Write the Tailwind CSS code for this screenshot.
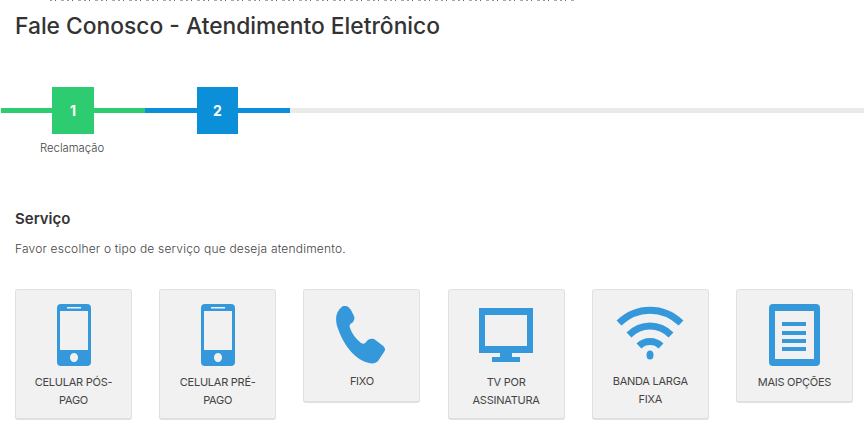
<!DOCTYPE html>
<html lang="pt-BR">
<head>
<meta charset="utf-8">
<title>Fale Conosco</title>
<script src="https://cdn.jsdelivr.net/npm/@tailwindcss/browser@4"></script>
</head>
<body class="bg-white w-[864px] h-[430px] overflow-hidden font-['Inter','Liberation_Sans',sans-serif] text-[#333]">
  <div class="h-[1px] ml-[50px] w-[525px] bg-[repeating-linear-gradient(90deg,#999_0_2px,transparent_2px_5px,#666_5px_6px,transparent_6px_11px,#aaa_11px_14px,transparent_14px_17px)]"></div>
  <h1 class="ml-[15px] mt-[11px] h-[28px] text-[22.8px] leading-[28px] font-[550] text-[#333] whitespace-nowrap">Fale Conosco - Atendimento Eletrônico</h1>

  <div class="relative mt-[47px] h-[47px] flex items-center">
    <div class="ml-[1px] w-[144px] h-[5px] bg-[#2ecc71]"></div>
    <div class="w-[145px] h-[5px] bg-[#0a8fd8]"></div>
    <div class="flex-1 h-[5px] bg-[#eaeaea]"></div>
    <div class="absolute left-[52px] top-0 w-[42px] h-[47px] bg-[#2ecc71] text-white text-[14px] font-bold flex items-center justify-center">1</div>
    <div class="absolute left-[197px] top-0 w-[41px] h-[47px] bg-[#0a8fd8] text-white text-[14px] font-bold flex items-center justify-center">2</div>
  </div>
  <p class="ml-[40px] mt-[7px] text-[11.3px] leading-[14px] text-[#444] font-light">Reclamação</p>

  <h2 class="ml-[15px] mt-[55px] text-[15px] leading-[18px] font-semibold text-[#333]">Serviço</h2>
  <p class="ml-[15px] mt-[13px] text-[12px] leading-[16px] tracking-[0.2px] text-[#444] font-light">Favor escolher o tipo de serviço que deseja atendimento.</p>

  <div class="ml-[15px] mt-[32px] flex items-start gap-[27.2px] text-[11px] leading-[18px] tracking-[-0.25px] text-[#444] text-center">
    <div class="w-[117px] h-[131px] rounded-[3px] bg-[#f1f1f1] border border-[#e0e0e0] border-b-2 flex flex-col items-center pt-[14px] px-[12px]">
      <svg class="w-[34px] h-[62px]" viewBox="0 0 34 62"><path fill="#3498db" fill-rule="evenodd" d="M4 0h26a4 4 0 0 1 4 4v54a4 4 0 0 1-4 4H4a4 4 0 0 1-4-4V4a4 4 0 0 1 4-4zM3 7v39h28V7zM10 3v1.500h14V3zM17 49a4 4.500 0 1 0 .01 0z"/></svg>
      <p class="mt-[7px]">CELULAR PÓS-PAGO</p>
    </div>
    <div class="w-[117px] h-[131px] rounded-[3px] bg-[#f1f1f1] border border-[#e0e0e0] border-b-2 flex flex-col items-center pt-[14px] px-[12px]">
      <svg class="w-[34px] h-[62px]" viewBox="0 0 34 62"><path fill="#3498db" fill-rule="evenodd" d="M4 0h26a4 4 0 0 1 4 4v54a4 4 0 0 1-4 4H4a4 4 0 0 1-4-4V4a4 4 0 0 1 4-4zM3 7v39h28V7zM10 3v1.500h14V3zM17 49a4 4.500 0 1 0 .01 0z"/></svg>
      <p class="mt-[7px]">CELULAR PRÉ-PAGO</p>
    </div>
    <div class="w-[117px] h-[114px] rounded-[3px] bg-[#f1f1f1] border border-[#e0e0e0] border-b-2 flex flex-col items-center pt-[16px] px-[8px]">
      <svg class="w-[52px] h-[58px]" viewBox="0 0 52 58"><path fill="#3498db" d="M7 0c3-1 6 1 8 4l3 6c1 3 0 5-2 7-2 1-3 2-2 5 2 6 6 11 11 15 2 1 4 1 5-1 2-3 5-4 8-3l8 6c3 2 4 5 2 7l-6 9c-2 2-5 3-9 2C20 54 8 41 1 20-1 12 0 5 7 0z"/></svg>
      <p class="mt-[8px]">FIXO</p>
    </div>
    <div class="w-[117px] h-[131px] rounded-[3px] bg-[#f1f1f1] border border-[#e0e0e0] border-b-2 flex flex-col items-center pt-[18px] px-[8px]">
      <svg class="w-[54px] h-[54px]" viewBox="0 0 54 54"><path fill="#3498db" fill-rule="evenodd" d="M0 0h54v45H33v4h8v5H13v-5h8v-4H0zM6 7v31h42V7z"/></svg>
      <p class="mt-[11px]">TV POR ASSINATURA</p>
    </div>
    <div class="w-[117px] h-[131px] rounded-[3px] bg-[#f1f1f1] border border-[#e0e0e0] border-b-2 flex flex-col items-center pt-[15px] px-[8px]">
      <svg class="w-[68px] h-[55px]" viewBox="0 0 68 55"><g fill="none" stroke="#3498db" stroke-width="7"><path d="M3 18C21 1 47 1 65 18"/><path d="M13 30C25 18 43 18 55 30"/><path d="M23 41C29 35 39 35 45 41"/></g><ellipse cx="34" cy="50" rx="3.500" ry="4.500" fill="#3498db"/></svg>
      <p class="mt-[12px]">BANDA LARGA FIXA</p>
    </div>
    <div class="w-[117px] h-[114px] rounded-[3px] bg-[#f1f1f1] border border-[#e0e0e0] border-b-2 flex flex-col items-center pt-[14px] px-[4px]">
      <svg class="w-[51px] h-[62px]" viewBox="0 0 51 62"><path fill="#3498db" fill-rule="evenodd" d="M4 0h43a4 4 0 0 1 4 4v54a4 4 0 0 1-4 4H4a4 4 0 0 1-4-4V4a4 4 0 0 1 4-4zM6 7v48h39V7zM13 18h24v4H13zM13 27h24v4H13zM13 35h24v4H13zM13 43h24v4H13z"/></svg>
      <p class="mt-[7px] whitespace-nowrap">MAIS OPÇÕES</p>
    </div>
  </div>
</body>
</html>
